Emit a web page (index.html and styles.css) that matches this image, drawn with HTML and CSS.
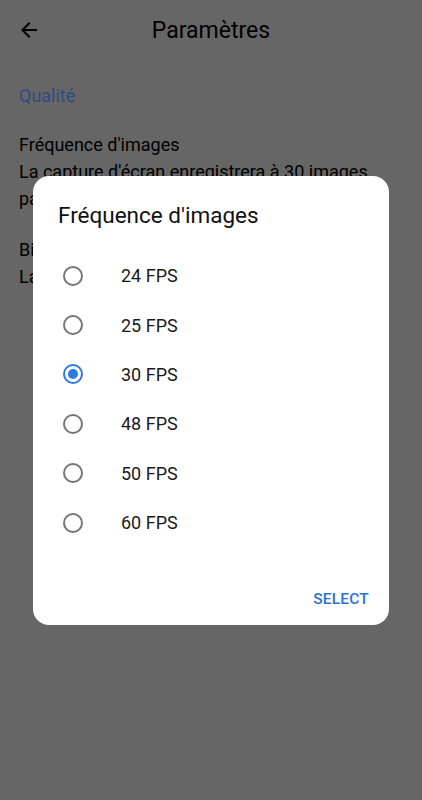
FILE: index.html
```html
<!DOCTYPE html>
<html lang="fr">
<head>
  <meta charset="UTF-8" />
  <meta name="viewport" content="width=device-width, initial-scale=1.0"/>
  <title>Paramètres</title>
  <link rel="stylesheet" href="styles.css">
</head>
<body>

  <!-- Settings screen (dimmed behind the dialog) -->
  <header class="toolbar">
    <button class="back" aria-label="Retour">
      <svg width="24" height="24" viewBox="0 0 24 24"><path d="M20 11H7.83l5.59-5.59L12 4l-8 8 8 8 1.41-1.41L7.83 13H20v-2z" fill="#000"/></svg>
    </button>
    <h1>Paramètres</h1>
  </header>

  <main class="prefs">
    <h2 class="category">Qualité</h2>
    <div class="pref">
      <div class="pref-title">Fréquence d'images</div>
      <div class="pref-summary">La capture d'écran enregistrera à 30 images par seconde</div>
    </div>
    <div class="pref">
      <div class="pref-title">Bitrate</div>
      <div class="pref-summary">La capture d'écran enregistrera à 8 Mbps</div>
    </div>
  </main>

  <!-- Dialog -->
  <div class="scrim">
    <div class="dialog">
      <h3 class="dialog-title">Fréquence d'images</h3>
      <ul class="choices">
        <li class="choice"><span class="radio"></span>24 FPS</li>
        <li class="choice"><span class="radio"></span>25 FPS</li>
        <li class="choice"><span class="radio checked"></span>30 FPS</li>
        <li class="choice"><span class="radio"></span>48 FPS</li>
        <li class="choice"><span class="radio"></span>50 FPS</li>
        <li class="choice"><span class="radio"></span>60 FPS</li>
      </ul>
      <div class="actions">
        <button class="text-btn">SELECT</button>
      </div>
    </div>
  </div>

</body>
</html>
```

FILE: styles.css
```css
* {
  box-sizing: border-box;
}

body, html {
  margin: 0;
  padding: 0;
  font-family: Roboto, 'Noto Sans', sans-serif;
  background: #666;
  color: #000;
  overflow: hidden;
}

.toolbar {
  height: 60px;
  display: flex;
  align-items: center;
}

.back {
  background: none;
  border: none;
  padding: 0;
  margin-left: 17px;
  width: 24px;
  height: 24px;
  display: flex;
}

.toolbar h1 {
  flex: 1;
  margin: 0 0 0 -41px;
  text-align: center;
  font-size: 23px;
  font-weight: 400;
}

.prefs {
  padding: 24px 26px 0 19px;
}

.category {
  margin: 0;
  font-size: 18px;
  font-weight: 400;
  line-height: 24px;
  color: #2f4c80;
}

.pref {
  margin-top: 23px;
  font-size: 18px;
  line-height: 27px;
}

.pref + .pref {
  margin-top: 24px;
}

.scrim {
  position: fixed;
  inset: 0;
  display: flex;
  align-items: center;
  justify-content: center;
}

.dialog {
  width: 356px;
  height: 449px;
  background: #fff;
  border-radius: 16px;
  padding-top: 24px;
  display: flex;
  flex-direction: column;
}

.dialog-title {
  margin: 0;
  padding-left: 25px;
  font-size: 22.5px;
  font-weight: 400;
  line-height: 30px;
  color: #111;
}

.choices {
  list-style: none;
  margin: 21.5px 0 0;
  padding: 0;
}

.choice {
  height: 49.4px;
  display: flex;
  align-items: center;
  padding-left: 30px;
  font-size: 18px;
  color: #1a1a1a;
}

.radio {
  width: 20px;
  height: 20px;
  border: 2px solid #757575;
  border-radius: 50%;
  margin-right: 38px;
  display: flex;
  align-items: center;
  justify-content: center;
}

.radio.checked {
  border-color: #2a7ae2;
}

.radio.checked::after {
  content: "";
  width: 10px;
  height: 10px;
  border-radius: 50%;
  background: #2a7ae2;
}

.actions {
  margin-top: auto;
  display: flex;
  justify-content: flex-end;
  padding: 0 12px 8px;
}

.text-btn {
  background: none;
  border: none;
  height: 36px;
  padding: 0 8px;
  font-family: Roboto, sans-serif;
  font-size: 15.5px;
  font-weight: 500;
  letter-spacing: 0.2px;
  color: #2a72d6;
}
```
